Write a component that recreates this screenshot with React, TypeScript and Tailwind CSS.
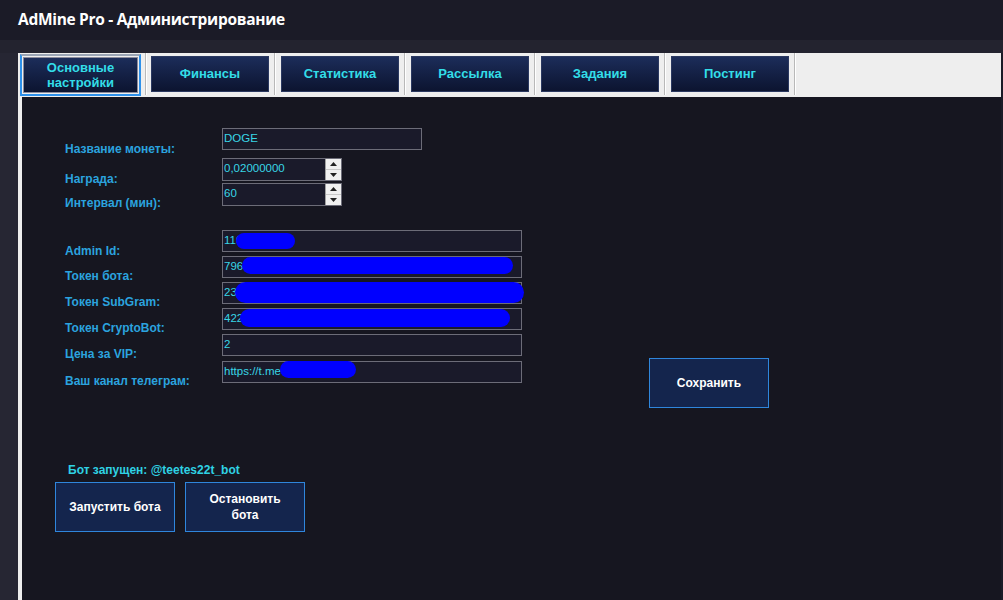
import React from "react";

const tabs = ["Финансы", "Статистика", "Рассылка", "Задания", "Постинг"];

function Field({ value, w, h = 22, mt, blob }: { value: string; w: number; h?: number; mt: number; blob?: { l: number; t: number; w: number; h: number } }) {
  return (
    <div
      className="relative border border-[#6c6c78] bg-[#1a1a2a] text-[11.5px] leading-[16px] text-[#38d6e6] pl-[1px] pt-[1px] overflow-visible"
      style={{ width: w, height: h, marginTop: mt }}
    >
      {value}
      {blob && (
        <span
          className="absolute rounded-full bg-[#0000ff]"
          style={{ left: blob.l, top: blob.t, width: blob.w, height: blob.h }}
        />
      )}
    </div>
  );
}

function Spin({ value, mt }: { value: string; mt: number }) {
  return (
    <div className="flex w-[120px] h-[23px] border border-[#6c6c78] bg-[#1a1a2a]" style={{ marginTop: mt }}>
      <div className="flex-1 text-[11.5px] leading-[16px] text-[#38d6e6] pl-[1px] pt-[1px]">{value}</div>
      <div className="w-[16px] h-full flex flex-col bg-[#f0f0f0] border-l border-[#a0a0a0]">
        <div className="flex-1 flex items-center justify-center border-b border-[#c8c8c8]">
          <svg width="7" height="4" viewBox="0 0 7 4"><path d="M3.5 0L7 4H0z" fill="#222" /></svg>
        </div>
        <div className="flex-1 flex items-center justify-center">
          <svg width="7" height="4" viewBox="0 0 7 4"><path d="M0 0h7L3.5 4z" fill="#222" /></svg>
        </div>
      </div>
    </div>
  );
}

function Btn({ children }: { children: React.ReactNode }) {
  return (
    <button className="w-[120px] h-[50px] bg-[#14254d] border border-[#2f86dc] text-white text-[12px] font-bold leading-[16px] flex items-center justify-center text-center">
      {children}
    </button>
  );
}

export default function App() {
  const labels: [string, number][] = [
    ["Название монеты:", 45],
    ["Награда:", 16],
    ["Интервал (мин):", 10],
    ["Admin Id:", 34],
    ["Токен бота:", 11],
    ["Токен SubGram:", 12],
    ["Токен CryptoBot:", 12],
    ["Цена за VIP:", 12],
    ["Ваш канал телеграм:", 13],
  ];
  return (
    <div className="w-[1003px] h-[600px] overflow-hidden flex flex-col bg-[#1b1b27] font-['Liberation_Sans',Arial,sans-serif]">
      <div className="h-[40px] shrink-0 flex items-center pl-[18px] bg-[#1b1b27]">
        <span className="text-white text-[15.5px] font-bold font-['Open_Sans',sans-serif] tracking-[-0.3px]">AdMine Pro - Администрирование</span>
      </div>
      <div className="h-[13px] shrink-0 bg-[#23232f]" />
      <div className="flex flex-1 min-h-0">
        <div className="w-[18px] bg-[#262633]" />
        <div className="flex-1 flex flex-col bg-[#eeeeee] mr-[2px]">
          <div className="h-[44px] shrink-0 flex items-start">
            <div className="ml-[2px] mt-[1px] w-[121px] h-[42px] border-2 border-[#2d90ea] border-t-[#9aa4b4] p-[1px]">
              <div className="w-full h-full border border-[#8c8c9c] bg-gradient-to-b from-[#1c2d5a] to-[#0c1430] flex items-center justify-center text-center text-[#33dde8] text-[13px] font-bold leading-[15px]">
                Основные<br />настройки
              </div>
            </div>
            <div className="mx-[4px] w-[2px] h-[42px] border-l border-[#b8b8b8] bg-white" />
            {tabs.map((t) => (
              <div key={t} className="flex items-start">
                <div className="mt-[3px] w-[118px] h-[36px] border border-[#2a3860] bg-gradient-to-b from-[#1c2d5a] to-[#0c1430] flex items-center justify-center text-[#33dde8] text-[13px] font-bold">
                  {t}
                </div>
                <div className="mx-[5px] w-[2px] h-[42px] border-l border-[#b8b8b8] bg-white" />
              </div>
            ))}
          </div>
          <div className="flex-1 ml-[4px] bg-[#161620] flex flex-col">
            <div className="flex">
              <div className="ml-[43px] w-[157px] flex flex-col">
                {labels.map(([l, mt]) => (
                  <div key={l} className="text-[12px] font-bold leading-[14px] text-[#2ba3df]" style={{ marginTop: mt }}>
                    {l}
                  </div>
                ))}
              </div>
              <div className="flex flex-col">
                <Field value="DOGE" w={200} mt={31} />
                <Spin value="0,02000000" mt={8} />
                <Spin value="60" mt={2} />
                <Field value="110" w={300} mt={24} blob={{ l: 13, t: 2, w: 59, h: 16 }} />
                <Field value="7968" w={300} mt={4} blob={{ l: 19, t: 0, w: 271, h: 17 }} />
                <Field value="231" w={300} mt={4} blob={{ l: 12, t: -1, w: 289, h: 21 }} />
                <Field value="4221" w={300} mt={4} blob={{ l: 17, t: 0, w: 270, h: 18 }} />
                <Field value="2" w={300} mt={4} />
                <Field value="https://t.me" w={300} mt={5} blob={{ l: 57, t: -1, w: 76, h: 17 }} />
              </div>
              <div className="ml-[127px] mt-[261px]">
                <Btn>Сохранить</Btn>
              </div>
            </div>
            <div className="ml-[33px] mt-[55px] flex flex-col">
              <div className="ml-[13px] text-[12px] font-bold leading-[14px] text-[#2fd2e4]">Бот запущен: @teetes22t_bot</div>
              <div className="mt-[5px] flex gap-[10px]">
                <Btn>Запустить бота</Btn>
                <Btn>
                  Остановить
                  <br />
                  бота
                </Btn>
              </div>
            </div>
          </div>
        </div>
      </div>
    </div>
  );
}
